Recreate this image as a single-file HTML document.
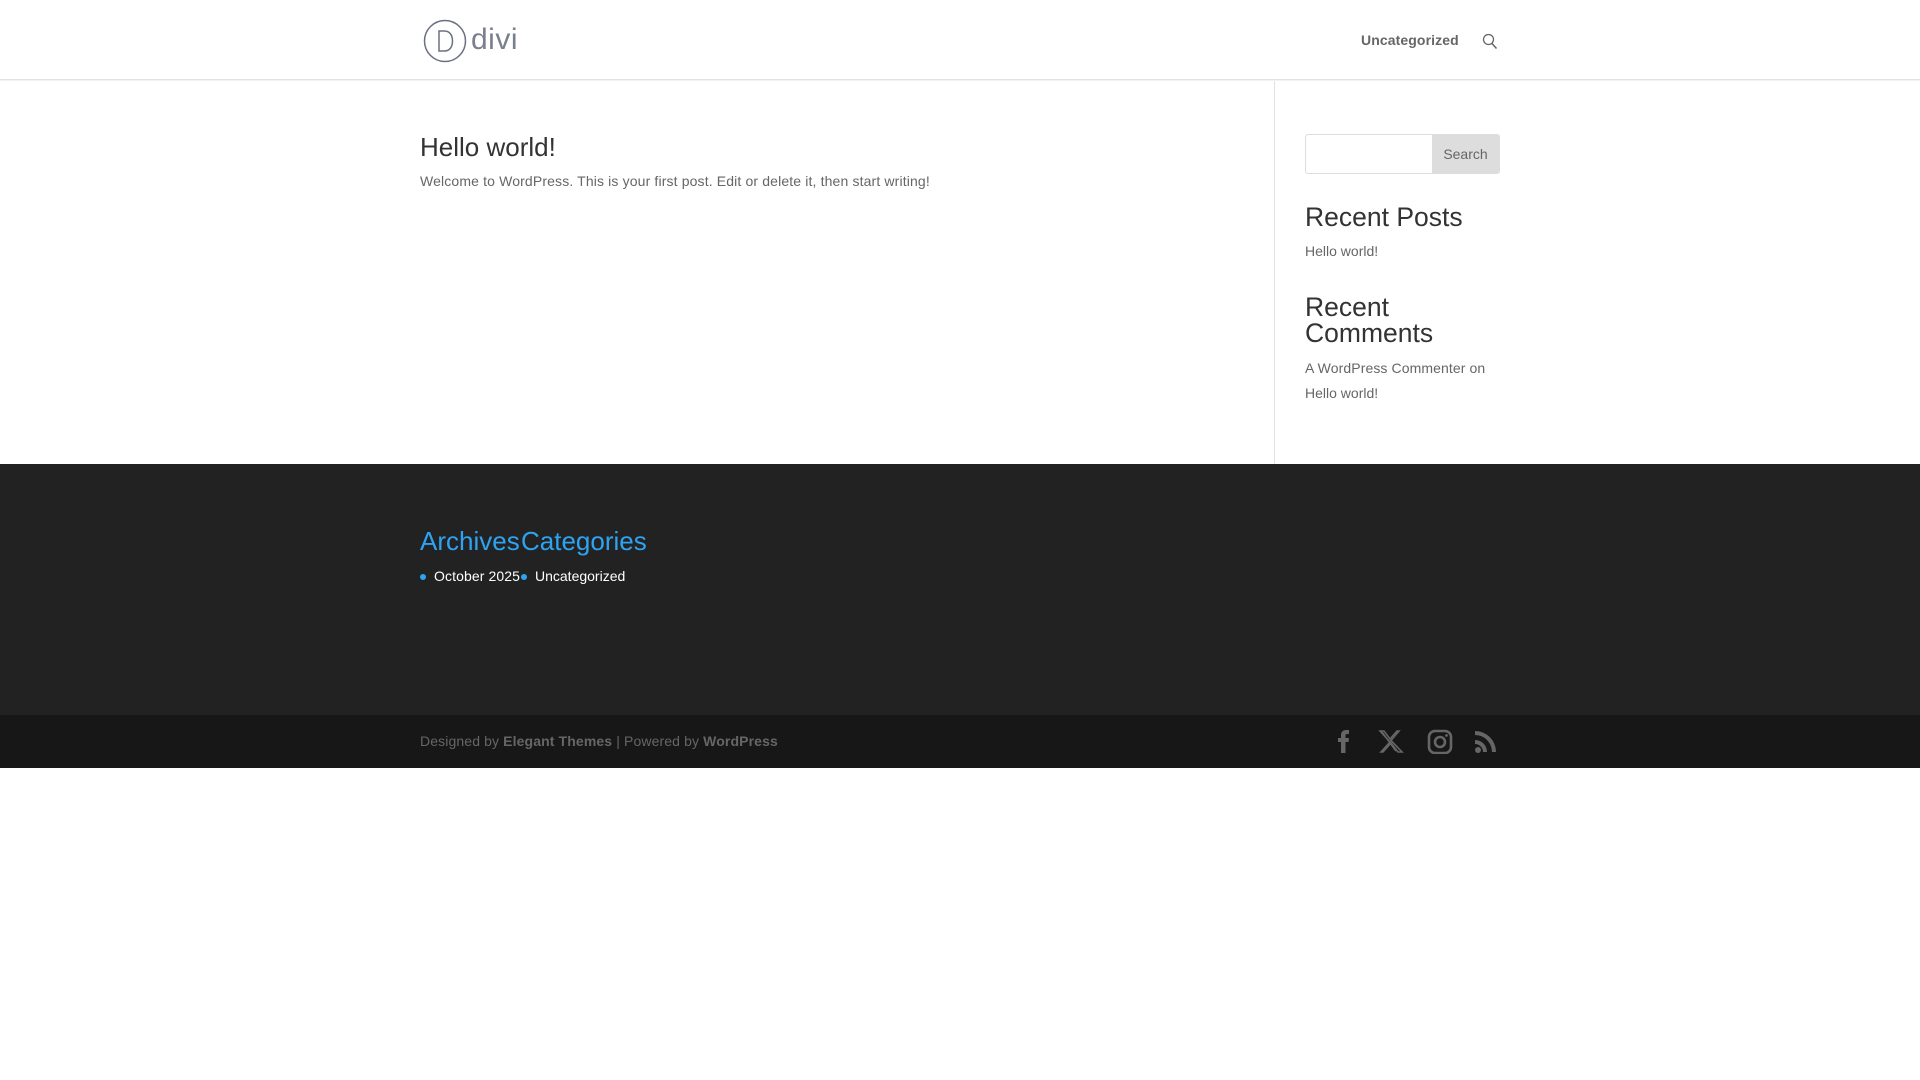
<!DOCTYPE html>
<html><head><meta charset="utf-8"><style>
*{margin:0;padding:0;box-sizing:border-box}
body{width:1920px;height:1080px;background:#fff;font-family:"Liberation Sans",Arial,sans-serif;color:#666;font-size:14px;position:relative;overflow:hidden}
.a{position:absolute;white-space:nowrap}
</style></head><body>
<div class="a" style="left:0;top:0;width:1920px;height:80px;border-bottom:1px solid #e2e2e2;box-shadow:0 1px 0 rgba(0,0,0,.05)"></div>
<svg class="a" style="left:423px;top:19px" width="44" height="44" viewBox="0 0 44 44"><circle cx="22" cy="22" r="20.5" fill="none" stroke="#6b7080" stroke-width="1.5"/><path d="M16 12h5.5c5 0 8 4 8 10s-3 10-8 10H16z" fill="none" stroke="#6b7080" stroke-width="1.5"/></svg>
<div class="a" style="left:471px;top:23px;font-size:30px;color:#7a7f8e;letter-spacing:0.5px">divi</div>
<div class="a" style="left:1361px;top:32px;font-weight:bold;color:#666;font-size:14px;letter-spacing:.1px">Uncategorized</div>
<svg class="a" style="left:1482px;top:33px" width="16" height="17" viewBox="0 0 16 17"><circle cx="6.5" cy="6.5" r="5" fill="none" stroke="#666" stroke-width="1.3"/><line x1="10" y1="10.5" x2="14.5" y2="15.5" stroke="#666" stroke-width="1.5"/></svg>
<div class="a" style="left:1274px;top:81px;width:1px;height:383px;background:#e2e2e2"></div>
<div class="a" style="left:420px;top:132px;font-size:26px;color:#333">Hello world!</div>
<div class="a" style="left:420px;top:173px;font-size:14px;letter-spacing:.14px">Welcome to WordPress. This is your first post. Edit or delete it, then start writing!</div>
<div class="a" style="left:1305px;top:134px;width:195px;height:40px;border:1px solid #ddd;border-radius:3px;overflow:hidden"><div style="position:absolute;right:0;top:0;width:67px;height:38px;background:#ddd;color:#666;font-size:14px;text-align:center;line-height:38px">Search</div></div>
<div class="a" style="left:1305px;top:202px;font-size:26.5px;color:#333">Recent Posts</div>
<div class="a" style="left:1305px;top:243px">Hello world!</div>
<div class="a" style="left:1305px;top:294px;font-size:26.5px;color:#333;line-height:26px;white-space:normal;width:200px">Recent<br>Comments</div>
<div class="a" style="left:1305px;top:360px;letter-spacing:.1px">A WordPress Commenter on</div>
<div class="a" style="left:1305px;top:385px">Hello world!</div>
<div class="a" style="left:0;top:464px;width:1920px;height:251px;background:#222"></div>
<div class="a" style="left:420px;top:526px;font-size:26px;color:#2ea3f2">Archives</div>
<div class="a" style="left:521px;top:526px;font-size:26px;color:#2ea3f2">Categories</div>
<div class="a" style="left:420px;top:574px;width:6px;height:6px;border-radius:50%;background:#2ea3f2"></div>
<div class="a" style="left:434px;top:568px;color:#fff;letter-spacing:.1px">October 2025</div>
<div class="a" style="left:521px;top:574px;width:6px;height:6px;border-radius:50%;background:#2ea3f2"></div>
<div class="a" style="left:535px;top:568px;color:#fff">Uncategorized</div>
<div class="a" style="left:0;top:715px;width:1920px;height:53px;background:#171717"></div>
<div class="a" style="left:420px;top:733px;color:#666;letter-spacing:.12px">Designed by <b>Elegant Themes</b> | Powered by <b>WordPress</b></div>
<svg class="a" style="left:1335px;top:728px" width="170" height="26" viewBox="0 0 170 26" fill="#666">
<path d="M6 25V14H3v-4h3V7c0-3 2-5 5-5h3v4h-2c-1 0-1.5.5-1.5 1.5V10h3.5l-.5 4h-3v11z"/>
<path d="M45 3h4l6 8 7-8h2l-8 9.5L67 24h-4l-7-9-8 9h-2l9-10z M47 4l14 19" fill="none" stroke="#666" stroke-width="1.6"/>
<rect x="94" y="3" width="22" height="22" rx="6" fill="none" stroke="#666" stroke-width="2.6"/><circle cx="105" cy="14" r="5" fill="none" stroke="#666" stroke-width="2.6"/><circle cx="111.5" cy="7.5" r="1.4"/>
<circle cx="143" cy="22" r="3"/><path d="M140 12a12 12 0 0 1 12 12h-4a8 8 0 0 0-8-8z M140 3a21 21 0 0 1 21 21h-4a17 17 0 0 0-17-17z"/>
</svg>
</body></html>
